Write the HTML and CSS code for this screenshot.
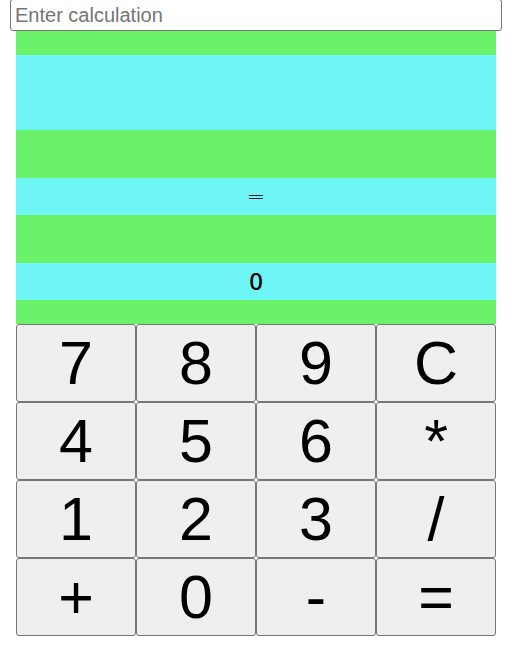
FILE: index.html
```html
<!DOCTYPE html>
<html>
<head>
<meta charset="utf-8">
<link rel="stylesheet" href="styles.css">
</head>
<body>
<input class="calc-input" type="text" placeholder="Enter calculation">
<div class="display">
  <div class="panel panel-tall"></div>
  <div class="panel panel-eq">=</div>
  <div class="panel panel-result">0</div>
</div>
<div class="keys">
  <button class="key">7</button>
  <button class="key">8</button>
  <button class="key">9</button>
  <button class="key">C</button>
  <button class="key">4</button>
  <button class="key">5</button>
  <button class="key">6</button>
  <button class="key">*</button>
  <button class="key">1</button>
  <button class="key">2</button>
  <button class="key">3</button>
  <button class="key">/</button>
  <button class="key">+</button>
  <button class="key">0</button>
  <button class="key">-</button>
  <button class="key">=</button>
</div>
</body>
</html>
```
FILE: styles.css
```css
html, body {
  margin: 0;
  padding: 0;
  background: #ffffff;
  font-family: "Liberation Sans", Arial, sans-serif;
}

.calc-input {
  display: block;
  box-sizing: border-box;
  width: 492px;
  height: 32px;
  margin: -1px 0 0 10px;
  padding: 0 4px;
  border: 1px solid #767676;
  border-radius: 3px;
  font-family: "Liberation Sans", Arial, sans-serif;
  font-size: 20px;
  color: #000;
  background: #fff;
  outline: none;
}

.calc-input::placeholder {
  color: #757575;
}

.display {
  width: 480px;
  margin: 0 0 0 16px;
  padding: 24px 0;
  background: #6af26a;
  display: flex;
  flex-direction: column;
  gap: 48px;
}

.panel {
  background: #6ef5f5;
  display: flex;
  align-items: center;
  justify-content: center;
  color: #000;
}

.panel-tall {
  height: 75px;
}

.panel-eq {
  height: 37px;
  font-size: 22px;
  font-family: "DejaVu Sans", sans-serif;
  font-weight: 200;
  color: #101030;
}

.panel-result {
  height: 37px;
  font-family: "Noto Sans", sans-serif;
  font-size: 24px;
  font-weight: 500;
  padding-bottom: 2px;
  box-sizing: border-box;
}

.keys {
  width: 480px;
  margin: 0 0 0 16px;
  display: grid;
  grid-template-columns: repeat(4, 120px);
  grid-auto-rows: 78px;
}

.key {
  box-sizing: border-box;
  margin: 0;
  padding: 0;
  background: #efefef;
  border: 1px solid #767676;
  border-radius: 3px;
  font-family: "Liberation Sans", Arial, sans-serif;
  font-size: 61px;
  color: #000;
  line-height: 1;
}
```
